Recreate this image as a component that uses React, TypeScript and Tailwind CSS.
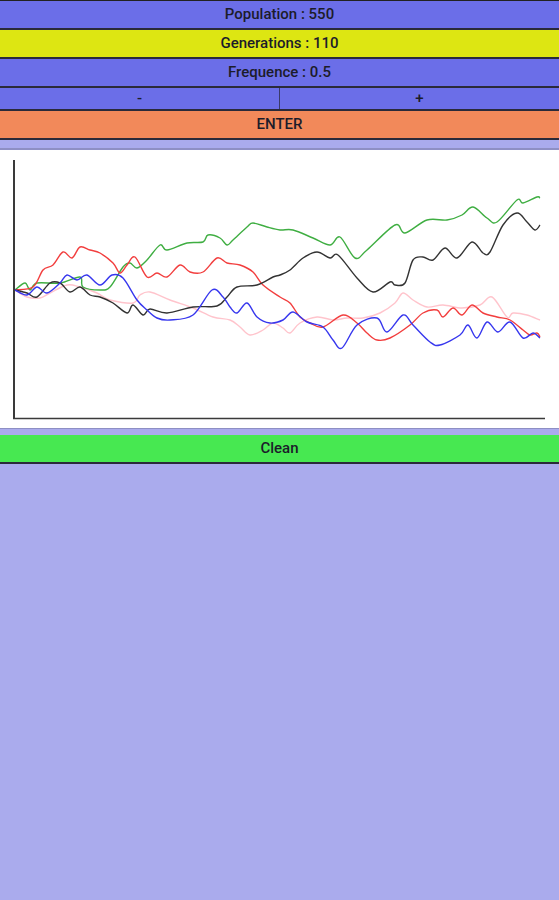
import React from "react";

// Courbes tracées à partir de la capture (coordonnées en pixels de la page).
const SERIES: { color: string; points: [number, number][] }[] = [
  {
    color: "#ffc4cc",
    points: [
      [15, 290], [27, 297], [40, 298], [50, 293], [67, 285], [80, 287], [97, 293], [110, 300],
      [133, 303], [140, 295], [150, 292], [170, 300], [193, 308], [213, 317], [230, 320],
      [240, 327], [250, 335], [263, 330], [273, 323], [283, 328], [290, 333], [300, 323],
      [317, 317], [333, 320], [347, 318], [363, 318], [380, 313], [395, 303], [403, 293],
      [413, 300], [427, 307], [443, 305], [462, 308], [480, 305], [492, 297], [507, 317],
      [513, 313], [527, 315], [540, 320],
    ],
  },
  {
    color: "#3fae42",
    points: [
      [15, 290], [25, 283], [30, 290], [37, 283], [60, 283], [80, 277], [83, 287], [100, 290],
      [110, 287], [123, 267], [130, 263], [137, 268], [147, 260], [160, 245], [167, 250],
      [187, 243], [203, 242], [208, 235], [220, 238], [227, 245], [233, 240], [247, 227],
      [253, 223], [267, 227], [280, 230], [293, 230], [313, 238], [330, 245], [340, 237],
      [355, 258], [367, 250], [395, 225], [405, 233], [427, 220], [447, 220], [462, 215],
      [473, 207], [487, 218], [497, 222], [517, 200], [523, 203], [537, 197], [540, 198],
    ],
  },
  {
    color: "#f23e3e",
    points: [
      [15, 290], [33, 287], [43, 270], [53, 265], [63, 252], [72, 258], [80, 247], [90, 250],
      [100, 253], [113, 263], [120, 273], [127, 265], [135, 257], [147, 277], [157, 273],
      [167, 277], [180, 265], [190, 272], [203, 272], [217, 258], [227, 263], [240, 265],
      [253, 272], [263, 285], [280, 297], [290, 303], [300, 317], [310, 323], [323, 327],
      [343, 315], [357, 323], [367, 333], [377, 340], [390, 338], [410, 325], [423, 313],
      [437, 310], [443, 317], [453, 308], [462, 315], [472, 305], [483, 313], [497, 317],
      [510, 320], [523, 330], [530, 335], [537, 333], [540, 337],
    ],
  },
  {
    color: "#333333",
    points: [
      [15, 290], [27, 293], [37, 297], [50, 283], [60, 283], [70, 292], [80, 287], [90, 295],
      [100, 297], [113, 303], [127, 313], [133, 305], [143, 315], [150, 309], [167, 313],
      [193, 307], [217, 306], [227, 297], [237, 287], [257, 285], [273, 277], [280, 275],
      [290, 270], [303, 258], [317, 252], [330, 258], [338, 255], [357, 278], [373, 292],
      [390, 282], [395, 285], [405, 283], [413, 260], [423, 257], [433, 260], [445, 248],
      [457, 258], [472, 242], [483, 253], [490, 252], [503, 225], [517, 213], [527, 222],
      [535, 230], [540, 225],
    ],
  },
  {
    color: "#3737ee",
    points: [
      [15, 290], [27, 295], [37, 287], [47, 293], [60, 283], [67, 275], [77, 280], [87, 275],
      [100, 285], [112, 275], [123, 278], [137, 300], [147, 310], [157, 318], [170, 320],
      [193, 315], [212, 290], [223, 297], [230, 307], [237, 313], [247, 303], [257, 317],
      [270, 323], [283, 320], [293, 312], [307, 322], [323, 327], [333, 340], [342, 348],
      [357, 325], [377, 318], [387, 332], [403, 315], [413, 325], [430, 342], [440, 345],
      [460, 335], [468, 325], [477, 338], [487, 322], [498, 332], [510, 322], [523, 338],
      [533, 333], [540, 338],
    ],
  },
];

const CHART_TOP = 150;

// Catmull-Rom -> Bézier pour lisser les courbes comme dans la capture.
function caminhoSuave(pts: [number, number][]): string {
  let d = `M${pts[0][0]},${pts[0][1]}`;
  for (let i = 0; i < pts.length - 1; i++) {
    const p0 = pts[i - 1] ?? pts[i];
    const p1 = pts[i];
    const p2 = pts[i + 1];
    const p3 = pts[i + 2] ?? p2;
    const c1x = p1[0] + (p2[0] - p0[0]) / 6;
    const c1y = p1[1] + (p2[1] - p0[1]) / 6;
    const c2x = p2[0] - (p3[0] - p1[0]) / 6;
    const c2y = p2[1] - (p3[1] - p1[1]) / 6;
    d += ` C${c1x.toFixed(1)},${c1y.toFixed(1)} ${c2x.toFixed(1)},${c2y.toFixed(1)} ${p2[0]},${p2[1]}`;
  }
  return d;
}

function Botao({ label, cor }: { label: string; cor: string }) {
  return (
    <div
      className={`flex h-[29px] items-center justify-center border-b-2 border-[#2a2a3a] text-[15px] font-medium text-[#1c1c2a] ${cor}`}
    >
      {label}
    </div>
  );
}

function Grafico() {
  return (
    <svg width="559" height="278" viewBox={`0 ${CHART_TOP} 559 278`} className="block">
      <rect x="0" y={CHART_TOP} width="559" height="278" fill="#ffffff" />
      {SERIES.map((s) => (
        <path
          key={s.color}
          d={caminhoSuave(s.points)}
          fill="none"
          stroke={s.color}
          strokeWidth="1.4"
          strokeLinejoin="round"
        />
      ))}
      <line x1="14" y1="160" x2="14" y2="419" stroke="#3a3a3a" strokeWidth="2" />
      <line x1="13" y1="418.5" x2="545" y2="418.5" stroke="#3a3a3a" strokeWidth="1.5" />
    </svg>
  );
}

export default function App() {
  return (
    <div className="min-h-[900px] w-[559px] bg-[#aaabed] font-['Roboto',sans-serif]">
      <div className="border-t border-[#222]">
        <Botao label="Population : 550" cor="bg-[#6b6ee8]" />
        <Botao label="Generations : 110" cor="bg-[#dde612]" />
        <Botao label="Frequence : 0.5" cor="bg-[#6b6ee8]" />
        <div className="flex h-[23px] border-b-2 border-[#2a2a3a] bg-[#6b6ee8] text-[15px] font-medium text-[#1c1c2a]">
          <div className="flex flex-1 items-center justify-center border-r border-[#3a3a6a]">-</div>
          <div className="flex flex-1 items-center justify-center">+</div>
        </div>
        <Botao label="ENTER" cor="bg-[#f2895a]" />
      </div>
      <div className="h-[10px] border-b-2 border-[#8e8fc4] bg-[#aaabed]" />
      <Grafico />
      <div className="h-[7px] border-t border-[#8e8fc4] bg-[#aaabed]" />
      <Botao label="Clean" cor="bg-[#47e851]" />
    </div>
  );
}
